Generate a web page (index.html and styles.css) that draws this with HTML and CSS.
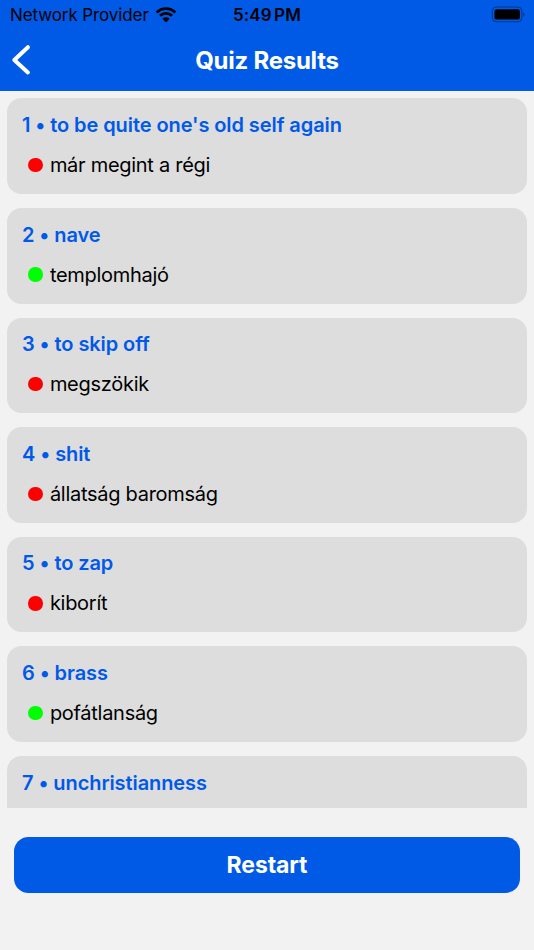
FILE: index.html
```html
<!DOCTYPE html>
<html lang="en">
<head>
    <meta charset="utf-8">
    <title>Quiz Results</title>
    <link rel="stylesheet" href="styles.css">
</head>
<body>
    <header class="header">
        <div class="status-bar">
            <div class="carrier">
                <span class="carrier-name">Network Provider</span>
                <svg class="wifi" width="22" height="16" viewBox="0 0 22 16">
                    <path d="M1.7 5.4a13.2 13.2 0 0 1 18.6 0M5 8.8a8.5 8.5 0 0 1 12 0" fill="none" stroke="#000" stroke-width="2.8"/>
                    <path d="M7.4 11.8a5.1 5.1 0 0 1 7.2 0L11 15.4z"/>
                </svg>
            </div>
            <span class="clock">5:49 PM</span>
            <svg class="battery" width="35" height="17" viewBox="0 0 35 17">
                <rect x="1.3" y="1" width="29.6" height="14.8" rx="4" fill="none" stroke="#000" stroke-opacity="0.4" stroke-width="1"/>
                <rect x="3.4" y="3.2" width="25.6" height="10.4" rx="2.2"/>
                <path d="M32.2 6.2c1.8.7 1.8 3.8 0 4.5z" fill-opacity="0.45"/>
            </svg>
        </div>
        <div class="nav-bar">
            <svg class="back" width="20" height="32" viewBox="0 0 20 32">
                <path d="M16.9 3.2L3.3 16l13.6 12.5" fill="none" stroke="#fff" stroke-width="4" stroke-linecap="round" stroke-linejoin="round"/>
            </svg>
            <h1 class="title">Quiz Results</h1>
        </div>
    </header>

    <main class="results">
        <div class="card">
            <h2 class="question">1 • to be quite one's old self again</h2>
            <p class="answer wrong"><span>már megint a régi</span></p>
        </div>
        <div class="card">
            <h2 class="question">2 • nave</h2>
            <p class="answer correct"><span>templomhajó</span></p>
        </div>
        <div class="card">
            <h2 class="question">3 • to skip off</h2>
            <p class="answer wrong"><span>megszökik</span></p>
        </div>
        <div class="card">
            <h2 class="question">4 • shit</h2>
            <p class="answer wrong"><span>állatság baromság</span></p>
        </div>
        <div class="card">
            <h2 class="question">5 • to zap</h2>
            <p class="answer wrong"><span>kiborít</span></p>
        </div>
        <div class="card">
            <h2 class="question">6 • brass</h2>
            <p class="answer correct"><span>pofátlanság</span></p>
        </div>
        <div class="card">
            <h2 class="question">7 • unchristianness</h2>
        </div>
    </main>

    <footer class="footer">
        <button type="button" class="restart">Restart</button>
    </footer>
</body>
</html>
```

FILE: styles.css
```css
* {
    box-sizing: border-box;
}

body {
    margin: 0;
    height: 950px;
    display: flex;
    flex-direction: column;
    overflow: hidden;
    background-color: #f2f2f2;
    font-family: Inter, "Liberation Sans", sans-serif;
}

.header {
    height: 91px;
    background-color: #005ae6;
}

.status-bar {
    display: grid;
    grid-template-columns: 1fr auto 1fr;
    align-items: center;
    height: 30px;
    padding: 0 8px 0 10px;
    font-size: 17px;
}

.carrier {
    display: flex;
    align-items: center;
    gap: 6px;
    white-space: nowrap;
}

.carrier-name {
    letter-spacing: -0.1px;
}

.clock {
    margin-right: 2px;
    font-weight: 600;
    letter-spacing: 0.1px;
    word-spacing: -2px;
}

.battery {
    justify-self: end;
    margin-top: -2px;
}

.nav-bar {
    display: grid;
    grid-template-columns: 32px 1fr 32px;
    align-items: center;
    height: 60px;
    padding: 0 11px;
}

.title {
    margin: 0;
    color: #fff;
    font-size: 24px;
    font-weight: 700;
    letter-spacing: -0.25px;
    text-align: center;
}

.results {
    height: 717px;
    padding: 7.4px 7.4px 0;
    overflow: hidden;
}

.card {
    height: 95.6px;
    margin-bottom: 14px;
    padding: 13.6px 14.6px;
    border-radius: 14.5px;
    background-color: #ddd;
}

.question {
    margin: 0;
    color: #0059e8;
    font-size: 20px;
    font-weight: 600;
    letter-spacing: -0.08px;
    line-height: 26px;
}

.answer {
    display: flex;
    align-items: center;
    gap: 7px;
    margin: 14px 0 0 6.4px;
    font-size: 20px;
    letter-spacing: -0.28px;
    line-height: 26px;
}

.answer::before {
    content: "";
    width: 14.5px;
    height: 14.5px;
    border-radius: 50%;
}

.wrong::before {
    background-color: #f00;
}

.correct::before {
    background-color: #0f0;
}

.footer {
    padding: 28.7px 14.4px 0;
}

.restart {
    display: block;
    width: 100%;
    height: 56px;
    border: none;
    border-radius: 14.5px;
    background-color: #005ae6;
    color: #fff;
    font-family: inherit;
    font-size: 23px;
    font-weight: 700;
    letter-spacing: -0.1px;
}
```
